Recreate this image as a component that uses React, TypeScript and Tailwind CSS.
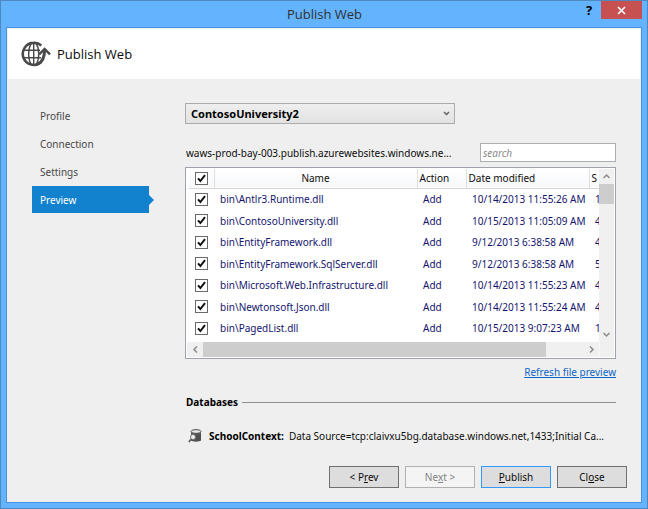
import { useState } from "react";

const pages = ["Profile", "Connection", "Settings", "Preview"];

const files = [
  { name: "bin\\Antlr3.Runtime.dll", action: "Add", date: "10/14/2013 11:55:26 AM", size: "1" },
  { name: "bin\\ContosoUniversity.dll", action: "Add", date: "10/15/2013 11:05:09 AM", size: "4" },
  { name: "bin\\EntityFramework.dll", action: "Add", date: "9/12/2013 6:38:58 AM", size: "4" },
  { name: "bin\\EntityFramework.SqlServer.dll", action: "Add", date: "9/12/2013 6:38:58 AM", size: "5" },
  { name: "bin\\Microsoft.Web.Infrastructure.dll", action: "Add", date: "10/14/2013 11:55:23 AM", size: "4" },
  { name: "bin\\Newtonsoft.Json.dll", action: "Add", date: "10/14/2013 11:55:24 AM", size: "4" },
  { name: "bin\\PagedList.dll", action: "Add", date: "10/15/2013 9:07:23 AM", size: "1" },
];

function GlobeIcon() {
  return (
    <svg width="30" height="26" viewBox="0 0 30 26" fill="none" stroke="#4a4a4a" className="shrink-0" aria-hidden="true">
      <path d="M20.3 4.4A10.8 10.8 0 0 0 12.8 1.9A11 11 0 1 0 20 21.2" strokeWidth="2.6" />
      <path d="M2.5 9.2H19M2 16.8H20" strokeWidth="1.4" />
      <path d="M12.7 2V24" strokeWidth="1.4" />
      <path d="M10.2 2.4C6.8 8 6.8 18 10.2 23.6M15.2 2.4C18.6 8 18.6 18 15.2 23.6" strokeWidth="1.4" />
      <path d="M17 23C22 20.5 23.6 16 23.6 9" strokeWidth="3" />
      <path d="M18.2 13.4L23.6 8L29 13.4" strokeWidth="2.4" />
    </svg>
  );
}

function DatabaseIcon() {
  return (
    <svg width="14" height="14" viewBox="0 0 14 14" className="shrink-0" aria-hidden="true">
      <path d="M3 2.5V11.5C4.5 13 11.5 13 13 11.5V2.5Z" fill="#4f4f4f" />
      <ellipse cx="8" cy="2.5" rx="5" ry="1.9" fill="#e6e6e6" stroke="#4f4f4f" />
      <circle cx="5" cy="8" r="2.5" fill="#efefef" stroke="#777777" />
      <path d="M3.4 10L0.8 13" stroke="#555555" strokeWidth="1.6" />
    </svg>
  );
}

function Chevron({ className, d }: { className?: string; d: string }) {
  return (
    <svg className={className} width="7" height="7" viewBox="0 0 7 7" fill="none" strokeWidth="1.5" stroke="currentColor" aria-hidden="true">
      <path d={d} />
    </svg>
  );
}

function Tick({ label }: { label: string }) {
  return (
    <span className="mx-auto grid size-[13px]">
      <input
        type="checkbox"
        defaultChecked
        aria-label={label}
        className="peer col-start-1 row-start-1 size-[13px] appearance-none border border-[#6a6a6a] bg-white"
      />
      <svg
        viewBox="0 0 13 13"
        className="pointer-events-none invisible col-start-1 row-start-1 size-[13px] peer-checked:visible"
        fill="none"
        stroke="#111111"
        strokeWidth="2"
        aria-hidden="true"
      >
        <path d="M3 6.3L5.4 9L10 3.2" />
      </svg>
    </span>
  );
}

const buttonBase = "h-[22px] w-[70px] border text-center leading-4";

export default function App() {
  const [page, setPage] = useState("Preview");

  return (
    <div className="flex min-h-screen flex-col border border-[#4d88be] bg-[#64b3ff] font-['Noto_Sans','Open_Sans',sans-serif] text-[10px] leading-4 text-[#0c0c0c]">
      <header className="grid h-[26px] shrink-0 grid-cols-[1fr_auto_1fr] pr-[5px] pl-[6px]">
        <h1 className="col-start-2 self-center font-['Open_Sans',sans-serif] text-[13px] text-[#303030]">Publish Web</h1>
        <div className="flex items-start justify-end">
          <button type="button" aria-label="Help" className="h-[18px] w-6 font-['Open_Sans',sans-serif] text-[13px] leading-[18px] font-bold text-black">
            ?
          </button>
          <button type="button" aria-label="Close window" className="flex h-[18px] w-[41px] items-center justify-center bg-[#c75050] text-white">
            <svg width="9" height="9" viewBox="0 0 9 9" stroke="currentColor" strokeWidth="1.7" aria-hidden="true">
              <path d="M1 1L8 8M8 1L1 8" />
            </svg>
          </button>
        </div>
      </header>

      <div className="mx-[5px] mb-[5px] flex flex-1 flex-col border border-[#4692dc] bg-[#efefef]">
        <div className="mx-px mt-px flex h-[50px] shrink-0 items-center gap-[6px] bg-white pl-[13px]">
          <GlobeIcon />
          <h2 className="font-['Open_Sans',sans-serif] text-[13px]">Publish Web</h2>
        </div>

        <div className="flex flex-1 px-[25px]">
          <nav className="mt-[23px] flex w-[153px] shrink-0 flex-col gap-px">
            {pages.map((p) => (
              <button
                key={p}
                type="button"
                onClick={() => setPage(p)}
                className={p === page ? "flex h-[27px] items-center text-white" : "flex h-[27px] items-center text-[#484848]"}
              >
                <span className={p === page ? "flex h-full w-[117px] items-center bg-[#1382ce] pl-2" : "pl-2"}>{p}</span>
                {p === page && (
                  <svg width="5" height="10" viewBox="0 0 5 10" fill="#1382ce" aria-hidden="true">
                    <path d="M0 0L5 5L0 10Z" />
                  </svg>
                )}
              </button>
            ))}
          </nav>

          <main className="min-w-0 flex-1 pt-6">
            <div className="grid w-[270px] items-center text-[#606060]">
              <select
                aria-label="Publish profile"
                className="col-start-1 row-start-1 h-[21px] appearance-none border border-[#acacac] bg-linear-to-b from-[#efefef] to-[#e2e2e2] pl-[5px] text-[11px] leading-4 font-bold text-black"
              >
                <option>ContosoUniversity2</option>
              </select>
              <Chevron className="pointer-events-none col-start-1 row-start-1 mr-[5px] justify-self-end" d="M1 2L3.5 4.5L6 2" />
            </div>

            <div className="mt-[19px] flex items-center justify-between">
              <span className="pl-px whitespace-nowrap">waws-prod-bay-003.publish.azurewebsites.windows.ne...</span>
              <input
                type="text"
                aria-label="Search files"
                placeholder="search"
                className="h-[19px] w-[136px] shrink-0 border border-[#abadb3] bg-white px-[2px] italic placeholder:text-[#8a8a8a]"
              />
            </div>

            <div className="mt-[5px] border border-[#9ea2aa] bg-white p-px">
              <div className="flex h-[173px]">
                <div className="min-w-0 flex-1 overflow-hidden pl-[2px]">
                  <table className="h-[170px] w-full table-fixed border-collapse text-left text-[#14146e]">
                    <colgroup>
                      <col className="w-[25px]" />
                      <col />
                      <col className="w-[49px]" />
                      <col className="w-[123px]" />
                      <col className="w-[10px]" />
                    </colgroup>
                    <thead>
                      <tr className="h-[19px] border-b border-[#d5d5d5] bg-linear-to-b from-white to-[#f7f8fa] text-[#0c0c0c]">
                        <th className="border-r border-[#dedfe1] p-0">
                          <Tick label="Select all files" />
                        </th>
                        <th className="border-r border-[#dedfe1] p-0 text-center font-normal">Name</th>
                        <th className="border-r border-[#dedfe1] p-0 pl-[2px] font-normal">Action</th>
                        <th className="border-r border-[#dedfe1] p-0 pl-[2px] font-normal whitespace-nowrap">Date modified</th>
                        <th className="overflow-hidden p-0 pl-[2px] font-normal">S</th>
                      </tr>
                    </thead>
                    <tbody>
                      {files.map((f) => (
                        <tr key={f.name}>
                          <td className="p-0">
                            <Tick label={f.name} />
                          </td>
                          <td className="p-0 pl-[6px] whitespace-nowrap">{f.name}</td>
                          <td className="p-0 pl-[6px]">{f.action}</td>
                          <td className="p-0 pl-[6px] whitespace-nowrap">{f.date}</td>
                          <td className="overflow-hidden p-0 pl-[6px]">{f.size}</td>
                        </tr>
                      ))}
                    </tbody>
                  </table>
                </div>
                <div className="flex w-[15px] shrink-0 flex-col items-center bg-[#f0f0f0] text-[#8a8a8a]">
                  <div className="flex h-[15px] items-center">
                    <Chevron d="M0.5 5L3.5 2L6.5 5" />
                  </div>
                  <div className="h-5 w-full bg-[#cdcdcd]" />
                  <div className="mt-auto flex h-[15px] items-center">
                    <Chevron d="M0.5 2L3.5 5L6.5 2" />
                  </div>
                </div>
              </div>
              <div className="flex h-[15px] items-center bg-[#f0f0f0] text-[#8a8a8a]">
                <div className="flex w-4 justify-center">
                  <Chevron d="M5 0.5L2 3.5L5 6.5" />
                </div>
                <div className="h-full flex-1 bg-[#cdcdcd]" />
                <div className="flex w-[53px] justify-end pr-1">
                  <Chevron d="M2 0.5L5 3.5L2 6.5" />
                </div>
                <div className="h-full w-[15px] border-l border-[#f7f7f7]" />
              </div>
            </div>

            <div className="mt-[5px] flex justify-end">
              <a href="#refresh" className="text-[#0f66c8] underline">
                Refresh file preview
              </a>
            </div>

            <section className="mt-[14px]">
              <div className="flex items-center gap-1 pl-px">
                <h3 className="font-bold text-black">Databases</h3>
                <div className="h-px flex-1 bg-[#8f8f8f]" />
              </div>
              <div className="mt-[18px] flex items-center pl-[3px] whitespace-nowrap">
                <DatabaseIcon />
                <p className="ml-[7px] flex gap-[5px]">
                  <b className="text-black">SchoolContext:</b>
                  <span>Data Source=tcp:claivxu5bg.database.windows.net,1433;Initial Ca...</span>
                </p>
              </div>
            </section>
          </main>
        </div>

        <footer className="mt-[21px] mr-[14px] mb-[14px] flex justify-end gap-[6px]">
          <button type="button" className={`${buttonBase} border-[#707070] bg-[#dddddd]`}>
            &lt; P<u>r</u>ev
          </button>
          <button type="button" disabled className={`${buttonBase} border-[#adb2b5] bg-[#f4f4f4] text-[#838383]`}>
            Ne<u>x</u>t &gt;
          </button>
          <button type="button" className={`${buttonBase} border-[#3399ff] bg-[#dddddd]`}>
            <u>P</u>ublish
          </button>
          <button type="button" className={`${buttonBase} border-[#707070] bg-[#dddddd]`}>
            Cl<u>o</u>se
          </button>
        </footer>
      </div>
    </div>
  );
}
